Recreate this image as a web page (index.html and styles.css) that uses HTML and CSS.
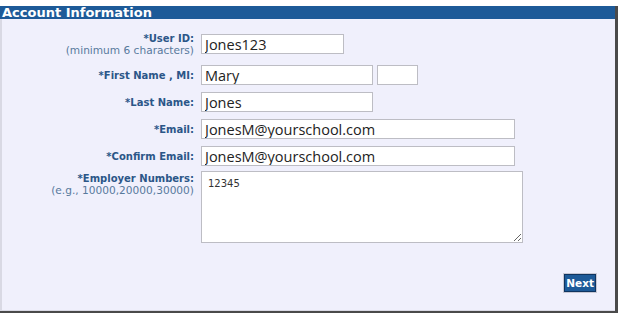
FILE: index.html
```html
<!DOCTYPE html>
<html lang="en">
<head>
  <meta charset="UTF-8">
  <title>Account Information</title>
  <link rel="stylesheet" href="styles.css">
</head>
<body>
  <div class="panel">
    <div class="panel-title">Account Information</div>
    <div class="panel-body">
      <div class="row tall first">
        <label class="label">*User ID:<span class="hint">(minimum 6 characters)</span></label>
        <input class="field w-short" type="text" value="Jones123">
      </div>
      <div class="row">
        <label class="label">*First Name , MI:</label>
        <div class="pair">
          <input class="field w-name" type="text" value="Mary">
          <input class="field w-mi" type="text" value="">
        </div>
      </div>
      <div class="row">
        <label class="label">*Last Name:</label>
        <input class="field w-name" type="text" value="Jones">
      </div>
      <div class="row">
        <label class="label">*Email:</label>
        <input class="field w-long" type="text" value="JonesM@yourschool.com">
      </div>
      <div class="row">
        <label class="label">*Confirm Email:</label>
        <input class="field w-long" type="text" value="JonesM@yourschool.com">
      </div>
      <div class="row tall">
        <label class="label">*Employer Numbers:<span class="hint">(e.g., 10000,20000,30000)</span></label>
        <textarea class="notes">12345</textarea>
      </div>
      <div class="actions">
        <button class="next-btn">Next</button>
      </div>
    </div>
  </div>
</body>
</html>
```

FILE: styles.css
```css
:root {
  --blue: #1d5a98;
  --label: #2b5688;
  --hint: #587a9c;
  --panel: #f0f0fc;
}
* { box-sizing: border-box; }
body {
  margin: 0;
  background: #fff;
  font-family: 'DejaVu Sans', Verdana, sans-serif;
}
.panel {
  margin-top: 6px;
  width: 618px;
  border-right: 3px solid #4a4a4a;
  border-bottom: 3px solid #4a4a4a;
  background: var(--panel);
}
.panel-title {
  margin-top: 1px;
  background: var(--blue);
  color: #fff;
  font-size: 13px;
  font-weight: bold;
  line-height: 13px;
  height: 13px;
  padding-left: 2px;
}
.panel-body {
  border-left: 2px solid #d9d9e4;
  border-bottom: 1px solid #d9d9e4;
  padding-top: 14px;
  height: 292px;
}
.row {
  display: flex;
  align-items: center;
  gap: 7px;
  margin-bottom: 7px;
}
.row.tall { align-items: flex-start; }
.row.first { margin-bottom: 9px; }
.label {
  width: 192px;
  text-align: right;
  color: var(--label);
  font-size: 10px;
  font-weight: bold;
  line-height: 11px;
}
.hint {
  display: block;
  margin-top: 1px;
  color: var(--hint);
  font-size: 10.6px;
  font-weight: normal;
}
.row.first .field { margin-top: 1px; }
.field {
  height: 20px;
  border: 1px solid #bdbdc4;
  background: #fff;
  padding: 1px 3px 0;
  font-family: 'Open Sans', sans-serif;
  font-size: 14.5px;
  color: #222;
}
.pair { display: flex; gap: 4px; }
.w-short { width: 143px; }
.w-name { width: 172px; }
.w-mi { width: 41px; }
.w-long { width: 314px; }
.notes {
  width: 322px;
  height: 72px;
  margin-top: -2px;
  border: 1px solid #bdbdc4;
  background: #fff;
  padding: 6px 6px;
  font-family: 'DejaVu Sans', Verdana, sans-serif;
  font-size: 10px;
  color: #333;
  resize: vertical;
}
.actions {
  display: flex;
  justify-content: flex-end;
  padding-right: 19px;
  margin-top: 31px;
}
.next-btn {
  background: var(--blue);
  color: #fff;
  border: 1px solid #0f3560;
  outline: 1px solid #c8c8d4;
  font-family: inherit;
  font-size: 10.5px;
  font-weight: bold;
  height: 18px;
  padding: 0 1px;
  line-height: 16px;
}
```
